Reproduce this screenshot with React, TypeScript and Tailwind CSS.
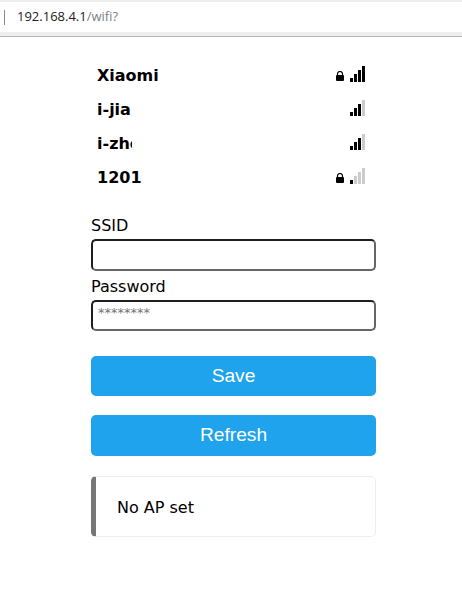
const networks = [
  { name: "Xiaomi", level: 4, locked: true },
  { name: "i-jia", level: 3, locked: false },
  { name: "i-zhong", level: 3, locked: false, clip: true },
  { name: "1201", level: 1, locked: true },
];

function Lock() {
  return (
    <svg width="8" height="10" viewBox="0 0 8 10" className="mr-[6px] mb-[1px]">
      <path d="M1.5 4.5V3a2.5 2.5 0 0 1 5 0v1.5" fill="none" stroke="#000" strokeWidth="1.2" />
      <rect x="0" y="4" width="8" height="6" rx="1" fill="#000" />
    </svg>
  );
}

function Signal({ level }: { level: number }) {
  const bars = [4, 8, 12, 16];
  return (
    <svg width="15" height="16" viewBox="0 0 15 16">
      {bars.map((h, i) => (
        <rect key={h} x={i * 4} y={16 - h} width="3" height={h} fill={i < level ? "#000" : "#ccc"} />
      ))}
    </svg>
  );
}

export default function App() {
  return (
    <div className="h-[597px] w-[462px] overflow-hidden bg-white font-['DejaVu_Sans',sans-serif] text-base text-black">
      {/* browser address bar */}
      <div className="h-[37px] border-b border-[#b4b4b4] bg-[#eeeeee] pt-[2px] pb-1">
        <div className="flex h-[30px] items-center bg-white pl-1">
          <div className="h-[15px] w-px bg-[#8a8a8a]" />
          <span className="ml-3 font-['Open_Sans','Liberation_Sans',sans-serif] text-[13px] text-[#222]">
            192.168.4.1<span className="text-[#7a7f85]">/wifi?</span>
          </span>
        </div>
      </div>

      <div className="mx-[91px] w-[285px] pt-[21px]">
        {networks.map((n) => (
          <div key={n.name} className="flex h-[34px] items-center justify-between pr-[11px] pl-[6px]">
            <span className={`whitespace-nowrap pt-[2px] text-base font-bold ${n.clip ? "w-[35px] overflow-hidden" : ""}`}>
              {n.name}
            </span>
            <span className="mb-[2px] flex items-end">
              {n.locked && <Lock />}
              <Signal level={n.level} />
            </span>
          </div>
        ))}

        <label className="mt-[19px] block h-[26px] text-base leading-[25px]">SSID</label>
        <input className="block h-[32px] w-full rounded-[5px] border-2 border-t-[#1f1f1f] border-r-[#666] border-b-[#666] border-l-[#1f1f1f] bg-white outline-none" />
        <label className="mt-[1px] block h-[28px] text-base leading-[29px]">Password</label>
        <input
          placeholder="********"
          className="block h-[31px] w-full rounded-[5px] border-2 border-t-[#1f1f1f] border-r-[#666] border-b-[#666] border-l-[#1f1f1f] bg-white px-[5px] pb-[6px] text-[13px] outline-none placeholder:text-[#757575]"
        />

        <button className="mt-[25px] block h-[40px] w-full rounded-[5px] bg-[#1fa3ec] font-['Liberation_Sans',sans-serif] text-[19.2px] text-white">
          Save
        </button>
        <button className="mt-[19px] block h-[41px] w-full rounded-[5px] bg-[#1fa3ec] font-['Liberation_Sans',sans-serif] text-[19.2px] text-white">
          Refresh
        </button>

        <div className="mt-[20px] flex h-[61px] items-center rounded-[5px] border border-l-[5px] border-[#eeeeee] border-l-[#777777] pt-[2px] pl-[21px] text-base">
          No AP set
        </div>
      </div>
    </div>
  );
}
